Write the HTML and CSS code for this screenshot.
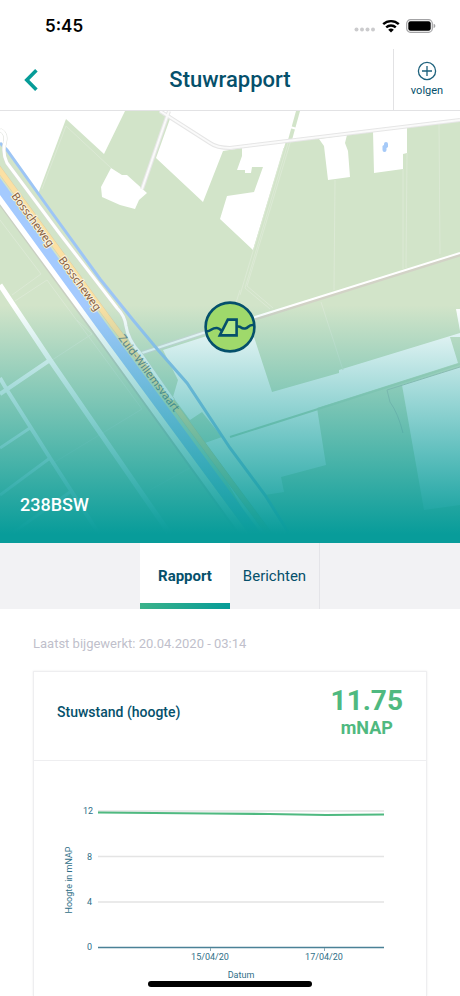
FILE: index.html
```html
<!DOCTYPE html>
<html lang="nl">

<head>
    <meta charset="UTF-8">
    <meta name="viewport" content="width=device-width, initial-scale=1.0">
    <title>Stuwrapport</title>
    <link rel="stylesheet" href="styles.css">
</head>

<body>

    <div class="screen">
        <div class="status-bar">
            <span class="clock">5:45</span>
            <div class="status-icons">
                <svg width="22" height="14" viewBox="0 0 22 14" fill="#cbcbcd">
                    <circle cx="2.5" cy="10.5" r="2" />
                    <circle cx="8" cy="10.5" r="2" />
                    <circle cx="13.5" cy="10.5" r="2" />
                    <circle cx="19" cy="10.5" r="2" />
                </svg>
                <svg width="18" height="14" viewBox="0 0 18 14" fill="none" stroke="#000" stroke-width="2.4">
                    <path d="M1.2 5.2 A11.4 11.4 0 0 1 16.8 5.2" />
                    <path d="M4.2 8.3 A7.2 7.2 0 0 1 13.8 8.3" />
                    <path d="M9 13.6 L6.2 10.8 A4 4 0 0 1 11.8 10.8 Z" fill="#000" stroke="none" />
                </svg>
                <svg width="30" height="14" viewBox="0 0 30 14">
                    <rect x="0.7" y="0.7" width="25.6" height="12.6" rx="3.8" fill="none" stroke="#a3a3a5" stroke-width="1.2" />
                    <rect x="2.3" y="2.3" width="22.4" height="9.4" rx="2.2" />
                    <path d="M27.6 4.8 Q29.4 5.4 29.4 7 Q29.4 8.6 27.6 9.2 Z" fill="#a3a3a5" />
                </svg>
            </div>
        </div>

        <header class="nav-bar">
            <button class="back" aria-label="Terug">
                <svg width="14" height="22" viewBox="0 0 14 22" fill="none" stroke="#069c98" stroke-width="3.6">
                    <path d="M12.4 1.3 L2.8 11 L12.4 20.7" />
                </svg>
            </button>
            <h1>Stuwrapport</h1>
            <button class="follow">
                <svg width="20" height="20" viewBox="0 0 20 20" fill="none" stroke="#1d617c" stroke-width="1.3">
                    <circle cx="10" cy="10" r="8.6" />
                    <path d="M10 5 V15 M5 10 H15" />
                </svg>
                volgen
            </button>
        </header>

        <div class="map">
            <svg class="map-tiles" viewBox="0 111 460 432" preserveAspectRatio="xMidYMid slice">
                <rect x="0" y="111" width="460" height="432" fill="#d2e4c9" />

                <!-- open land -->
                <g fill="#fff">
                    <path d="M0 111 H125 L104 154 L66 119 L38 194 L6 150 L0 142 Z" />
                    <path d="M111 168 L122 175 L127 175 L147 193 L139 200 L135 209 L120 205 L102 197 L101 187 Z" />
                    <path d="M160 111 H460 V119 L286 141 L253 250 L220 219 L227 196 L254 192 L263 167 H252 L251 173 H245 V170 H237 L242 156 V148 L223 151 L203 202 L156 158 L171 116 Z" />
                    <path d="M319 139 L347 135 L345 143 L348 151 L350 177 L328 180 L324 146 Z" />
                    <path d="M373 131 L407 126 V153 L403 154 V169 L374 173 Z" />
                    <path d="M163 350 L210 335 L253 334 L272 392 L339 373 V370 L460 333 V337 L450 337 L458 363 L317 408 L326 465 L281 477 L284 492 L265 495 L295 543 H262 L205 443 L222 437 L202 412 L190 420 L173 397 L178 380 Z" />
                    <path d="M402 385 L460 367 V505 L424 510 Z" />
                    <path d="M456 309 H460 V331 Z" />
                </g>
                <path d="M296 111 H300 L292 140 H288 Z" fill="#d2e4c9" />
                <path d="M290 127 L297 129" stroke="#fff" stroke-width="2" />
                <path d="M386 144 V146 L384.5 147 V150" stroke="#a6caf8" stroke-width="4" stroke-linecap="round" fill="none" />

                <!-- ditches and field edges -->
                <g fill="none" stroke="#dce9d5" stroke-width="1">
                    <path d="M335 180 L334 290 M403 169 V269 M407 153 L406 268 M439 123 L440 254" />
                    <path d="M284 148 L240 295 M288 143 L245 288 L270 309 M291 140 L247 286 L273 308 M240 290 L235 306" />
                    <path d="M66 126 L42 189 M66 126 L111 168" />
                    <path d="M0 220 L41 274 L12 295 M47 280 L15 301 M47 280 L142 409 L50 465 M77 320 L92 334 L0 394" />
                    <path d="M321 302 L343 370 M195 465 L150 490" />
                </g>
                <path d="M230 437 L460 364" stroke="#c5dcc0" stroke-width="2" />
                <path d="M460 367 L387 390 L390 402 Q398 413 403 433" fill="none" stroke="#bdc8bb" stroke-width="1" />

                <!-- field roads -->
                <path d="M255 319 L460 255" stroke="#d2d2c6" stroke-width="3" />
                <path d="M142 353 L206 332" stroke="#dcdcda" stroke-width="4" />
                <path d="M142 353 L206 332 M252 318 L460 253" stroke="#fff" stroke-width="2" />
                <g fill="none" stroke="#fff">
                    <path d="M0 285 L50 360 L174 540" stroke-width="5" />
                    <path d="M50 360 L0 394 M0 378 L7 390 L50 458 L103 540" stroke-width="4" />
                    <path d="M30 428 L0 448 M50 458 L0 495 M70 492 L0 542" stroke-width="3" />
                </g>
                <path d="M160 111 L210 143 Q217 148 230 148 L460 120 M169 111 L142 189" fill="none" stroke="#e6e6e6" stroke-width="4" />
                <path d="M160 111 L210 143 Q217 148 230 148 L460 120 M169 111 L142 189" fill="none" stroke="#fafafa" stroke-width="2" />

                <!-- stream -->
                <path d="M0 143 L7 150 L50 210 L100 279 L133 320 L158 350 L187 383 L230 448 L265 495 L295 543" fill="none" stroke="#9dc5f5" stroke-width="3" />

                <!-- canal with towpath and main road -->
                <path d="M-4 194 L91 324 L245 538" fill="none" stroke="#c9cfc2" stroke-width="8" />
                <path d="M-4 193 L91 322 L245 535" fill="none" stroke="#fff" stroke-width="7" />
                <path d="M-4 181 L101 325 L230 500 L262 543" fill="none" stroke="#a4cafe" stroke-width="10" />
                <path d="M-4 165 L113 325 L180 413 L230 481 L276 543" fill="none" stroke="#dccfa6" stroke-width="6" />
                <path d="M-4 165 L113 325 L180 413 L230 481 L276 543" fill="none" stroke="#fbe0a3" stroke-width="5" />
                <path d="M0 130 Q7 133 5 142 Q2 152 7 163 L60 234 L117 308 Q125 316 126 326 Q128 340 140 353 L173 400" fill="none" stroke="#d9dcd6" stroke-width="4" />
                <path d="M0 130 Q7 133 5 142 Q2 152 7 163 L60 234 L117 308 Q125 316 126 326 Q128 340 140 353 L173 400" fill="none" stroke="#fff" stroke-width="3" />

                <g class="street-names">
                    <text transform="translate(11 196) rotate(54)">Bosscheweg</text>
                    <text transform="translate(58 260) rotate(54)">Bosscheweg</text>
                    <text class="water-name" transform="translate(118 338) rotate(53)">Zuid-Willemsvaart</text>
                </g>
            </svg>
            <svg class="marker" width="52" height="52" viewBox="0 0 52 52" stroke="#05506b" stroke-width="2.6">
                <circle cx="26" cy="26" r="24.4" fill="#9fd96b" />
                <path d="M2.5 30.5 C8 30 7.5 26.5 13 27 C17 27.4 17 31 21 30.5 M33.5 25.5 C38 25 36 28 41 27.5 C45 27 44 23.6 49.5 24" fill="none" />
                <path d="M15.8 34.4 L23.8 18.6 H32.6 V34.4 Z" fill="#b4e88a" />
            </svg>
            <strong class="map-title">238BSW</strong>
        </div>

        <nav class="tabs">
            <button class="tab active">Rapport</button>
            <button class="tab">Berichten</button>
        </nav>

        <main class="report">
            <p class="updated">Laatst bijgewerkt: 20.04.2020 - 03:14</p>

            <section class="card">
                <div class="card-header">
                    <h2>Stuwstand (hoogte)</h2>
                    <div class="reading">
                        <span class="value">11.75</span>
                        <span class="unit">mNAP</span>
                    </div>
                </div>

                <svg class="chart" viewBox="0 0 392 234">
                    <path class="grid" d="M64 50 H350 M64 95.5 H350 M64 141 H350" />
                    <path class="axis" d="M64 186.5 H350" />
                    <path class="tick" d="M176.5 187 V190 M290.5 187 V190" />
                    <path class="series" d="M64 51.5 L176 52.5 L235 53 L292 54 L350 53.5" />
                    <g text-anchor="end">
                        <text x="59" y="53">12</text>
                        <text x="58" y="99">8</text>
                        <text x="58" y="144">4</text>
                        <text x="58" y="189">0</text>
                    </g>
                    <g text-anchor="middle">
                        <text x="176" y="199">15/04/20</text>
                        <text x="290" y="199">17/04/20</text>
                        <text x="207" y="217">Datum</text>
                        <text transform="translate(38 119) rotate(-90)">Hoogte in mNAP</text>
                    </g>
                </svg>
            </section>
        </main>

        <div class="home-indicator"></div>
    </div>

</body>

</html>
```
FILE: styles.css
```css
* {
    box-sizing: border-box;
}

body {
    margin: 0;
    background: #fff;
    color: #05506b;
    font-family: Roboto, "Liberation Sans", sans-serif;
}

button {
    border: none;
    padding: 0;
    background: none;
    color: inherit;
    font-family: inherit;
    cursor: pointer;
}

.screen {
    display: flex;
    flex-direction: column;
    min-height: 100vh;
}

/* Status bar */
.status-bar {
    display: flex;
    justify-content: space-between;
    align-items: center;
    height: 49px;
    padding: 2px 24px 0 45px;
}

.clock {
    color: #000;
    font-family: Inter, sans-serif;
    font-size: 17px;
    font-weight: 600;
}

.status-icons {
    display: flex;
    align-items: center;
    gap: 6px;
}

/* Navigation */
.nav-bar {
    display: grid;
    grid-template-columns: 67px 1fr 67px;
    height: 62px;
    border-bottom: 1px solid #e2e2e4;
}

.nav-bar h1 {
    margin: 0;
    align-self: center;
    text-align: center;
    font-size: 22px;
    font-weight: 500;
}

.back {
    display: flex;
    align-items: center;
    padding-left: 24px;
}

.follow {
    display: flex;
    flex-direction: column;
    align-items: center;
    justify-content: center;
    gap: 3px;
    padding-bottom: 2px;
    border-left: 1px solid #e2e2e4;
    font-size: 11px;
}

/* Map */
.map {
    position: relative;
    height: 432px;
    overflow: hidden;
}

.map-tiles {
    display: block;
    width: 100%;
    height: 100%;
}

.map::after {
    content: "";
    position: absolute;
    inset: 0;
    background: linear-gradient(rgba(8, 156, 154, 0) 45%, #089c9a 98%);
}

.street-names {
    font-family: "Noto Sans", sans-serif;
    font-size: 11px;
    fill: #86603f;
    stroke: #fdf3dc;
    stroke-width: 2px;
    paint-order: stroke;
}

.street-names .water-name {
    fill: #6b8288;
    stroke: none;
}

.marker {
    position: absolute;
    top: 50%;
    left: 50%;
    transform: translate(-50%, -50%);
    z-index: 1;
}

.map-title {
    position: absolute;
    left: 20px;
    bottom: 28px;
    z-index: 1;
    color: #fff;
    font-size: 18px;
    font-weight: 500;
}

/* Tabs */
.tabs {
    display: flex;
    justify-content: center;
    height: 66px;
    background: #f2f2f4;
}

.tab {
    width: 90px;
    border-right: 1px solid #e4e4e8;
    font-size: 15px;
}

.tab.active {
    display: flex;
    flex-direction: column;
    align-items: center;
    justify-content: space-between;
    border-right: none;
    background: #fff;
    font-weight: 700;
}

.tab.active::before {
    content: "";
    height: 6px;
}

.tab.active::after {
    content: "";
    width: 100%;
    height: 6px;
    background: linear-gradient(to right, #3bb28a, #069c98);
}

/* Report */
.report {
    display: flex;
    flex: 1;
    flex-direction: column;
    padding: 26px 33px 0;
}

.updated {
    margin: 0 0 18px;
    color: #c0bfcb;
    font-size: 13px;
    line-height: 18px;
}

.card {
    flex: 1;
    border: 1px solid #eeeef0;
    border-bottom: none;
    box-shadow: 0 0 2px rgba(0, 0, 0, 0.08);
}

.card-header {
    display: flex;
    justify-content: space-between;
    align-items: center;
    height: 89px;
    padding: 0 23px 8px;
    border-bottom: 1px solid #eeeef0;
}

.card-header h2 {
    margin: 0;
    font-size: 14px;
    font-weight: 500;
}

.reading {
    display: flex;
    flex-direction: column;
    align-items: center;
    color: #4fb980;
    font-weight: 700;
}

.value {
    font-size: 28px;
    line-height: 32px;
}

.unit {
    font-size: 18px;
    line-height: 22px;
}

/* Chart */
.chart {
    display: block;
    width: 100%;
    font-size: 9px;
    fill: #2f6f88;
}

.chart path {
    fill: none;
}

.chart .grid {
    stroke: #e4e4e4;
    stroke-width: 1.4;
}

.chart .axis {
    stroke: #4a8196;
    stroke-width: 1.6;
}

.chart .tick {
    stroke: #8aa9b5;
}

.chart .series {
    stroke: #4fb980;
    stroke-width: 2.2;
}

.home-indicator {
    position: fixed;
    bottom: 9px;
    left: 50%;
    width: 164px;
    height: 6px;
    border-radius: 3px;
    background: #000;
    transform: translateX(-50%);
}
```
